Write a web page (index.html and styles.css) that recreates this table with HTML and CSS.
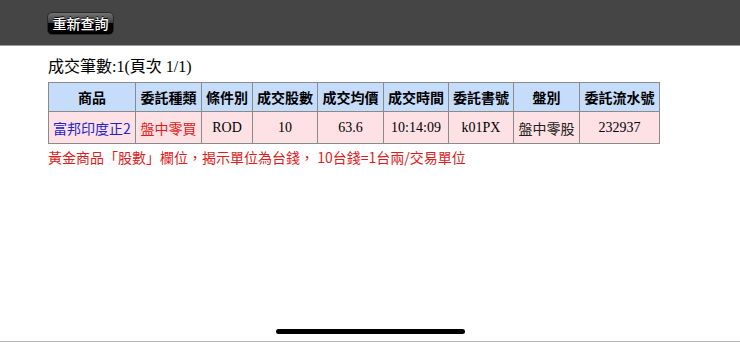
FILE: index.html
```html
<!DOCTYPE html>
<html lang="zh-Hant">
<head>
<meta charset="utf-8">
<title>成交查詢</title>
<link rel="stylesheet" href="styles.css">
</head>
<body>
<header class="topbar">
  <button class="btn-query" type="button">重新查詢</button>
</header>
<main class="content">
  <div class="summary">成交筆數:1(頁次 1/1)</div>
  <table class="deal-table">
    <colgroup>
      <col class="c1"><col class="c2"><col class="c3"><col class="c4"><col class="c5"><col class="c6"><col class="c7"><col class="c8"><col class="c9">
    </colgroup>
    <thead>
      <tr>
        <th>商品</th><th>委託種類</th><th>條件別</th><th>成交股數</th><th>成交均價</th><th>成交時間</th><th>委託書號</th><th>盤別</th><th>委託流水號</th>
      </tr>
    </thead>
    <tbody>
      <tr>
        <td class="stock">富邦印度正2</td>
        <td class="buy">盤中零買</td>
        <td>ROD</td>
        <td>10</td>
        <td>63.6</td>
        <td>10:14:09</td>
        <td>k01PX</td>
        <td class="cjk">盤中零股</td>
        <td>232937</td>
      </tr>
    </tbody>
  </table>
  <p class="note">黃金商品「股數」欄位，揭示單位為台錢， 10台錢=1台兩/交易單位</p>
</main>
<div class="home-indicator"></div>
<div class="bottom-line"></div>
</body>
</html>
```
FILE: styles.css
```css
html, body {
  margin: 0;
  padding: 0;
  background: #ffffff;
}
body {
  font-family: "Liberation Serif", "Noto Sans CJK TC", serif;
  color: #000;
  height: 342px;
  overflow: hidden;
}
.topbar {
  height: 46px;
  background: #454545;
  border-bottom: 1px solid #9c9c9c;
  box-sizing: border-box;
  padding: 12px 0 0 47px;
}
.btn-query {
  display: block;
  width: 67px;
  height: 23px;
  padding: 0;
  border: 1px solid #2a2a2a;
  border-radius: 5px;
  background: linear-gradient(#727272 0%, #404040 45%, #000 50%, #000 100%);
  color: #fff;
  font-family: "Noto Sans CJK TC", sans-serif;
  font-size: 14px;
  font-weight: 500;
  line-height: 21px;
  text-shadow: 0 -1px 0 #000;
}
.content {
  padding: 11px 0 0 48px;
}
.summary {
  font-size: 16px;
  line-height: 20px;
  height: 20px;
  margin-bottom: 5px;
}
.deal-table {
  border-collapse: collapse;
  table-layout: fixed;
  width: 611px;
}
.c1 { width: 87px; }
.c2 { width: 66px; }
.c3 { width: 51px; }
.c4 { width: 65px; }
.c5 { width: 66px; }
.c6 { width: 65px; }
.c7 { width: 65px; }
.c8 { width: 66px; }
.c9 { width: 80px; }
.deal-table th,
.deal-table td {
  border: 1px solid #8a8a8a;
  text-align: center;
  padding: 0;
  white-space: nowrap;
}
.deal-table th {
  background: #c6dcfb;
  height: 28px;
  font-family: "Noto Sans CJK TC", sans-serif;
  font-size: 14px;
  font-weight: 700;
}
.deal-table td {
  background: #fde1e4;
  height: 31px;
  font-size: 14px;
}
.deal-table td.stock {
  color: #2323d0;
  font-family: "Noto Sans CJK TC", sans-serif;
}
.deal-table td.buy {
  color: #e01b1b;
  font-family: "Noto Sans CJK TC", sans-serif;
}
.deal-table td.cjk {
  font-family: "Noto Sans CJK TC", sans-serif;
  color: #222;
}
.note {
  margin: 3px 0 0 0;
  font-family: "Noto Sans CJK TC", sans-serif;
  font-size: 14px;
  line-height: 20px;
  color: #e01b1b;
}
.home-indicator {
  position: absolute;
  left: 276px;
  top: 329px;
  width: 189px;
  height: 5px;
  border-radius: 3px;
  background: #000;
}
.bottom-line {
  position: absolute;
  left: 0;
  right: 0;
  top: 341px;
  height: 1px;
  background: #b5b5b5;
}
```
